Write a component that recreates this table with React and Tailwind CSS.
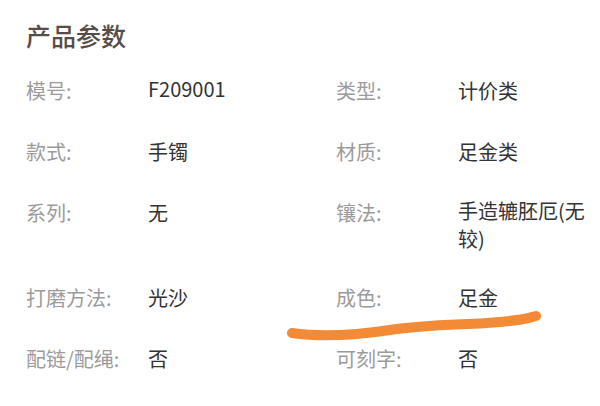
const rows = [
  [["模号:", "F209001"], ["类型:", "计价类"]],
  [["款式:", "手镯"], ["材质:", "足金类"]],
  [["系列:", "无"], ["镶法:", "手造辘胚厄(无较)"]],
  [["打磨方法:", "光沙"], ["成色:", "足金"]],
  [["配链/配绳:", "否"], ["可刻字:", "否"]],
];

const Cell = ({ label, value, wide }) => (
  <div className={`flex ${wide ? "w-[310px]" : "flex-1"}`}>
    <div className="w-[122px] shrink-0 text-[#9b9b9b]">{label}</div>
    <div className={`w-[138px] text-[#333333] ${value.length > 6 ? "leading-[28px]" : ""}`}>{value}</div>
  </div>
);

export default function App() {
  return (
    <div
      className="relative w-[600px] h-[406px] bg-white overflow-hidden pl-[26px] pt-[18px] text-[20px] leading-[32px]"
      style={{ fontFamily: '"Noto Sans CJK SC", "Noto Sans", sans-serif' }}
    >
      <h1 className="text-[25px] leading-[34px] text-[#574c47] font-medium mb-[23px]">产品参数</h1>

      <div className="flex flex-col gap-[29px]">
        {rows.map(([l, r], i) => (
          <div key={i} className="flex">
            <Cell label={l[0]} value={l[1]} wide />
            <Cell label={r[0]} value={r[1]} />
          </div>
        ))}
      </div>

      {/* orange marker stroke */}
      <svg className="absolute inset-0 pointer-events-none" width="600" height="406">
        <path
          d="M292 333 C 320 337, 350 336, 390 330 S 470 325, 500 322 S 528 318, 536 316"
          fill="none"
          stroke="#f28a36"
          strokeWidth="10"
          strokeLinecap="round"
        />
      </svg>
    </div>
  );
}
